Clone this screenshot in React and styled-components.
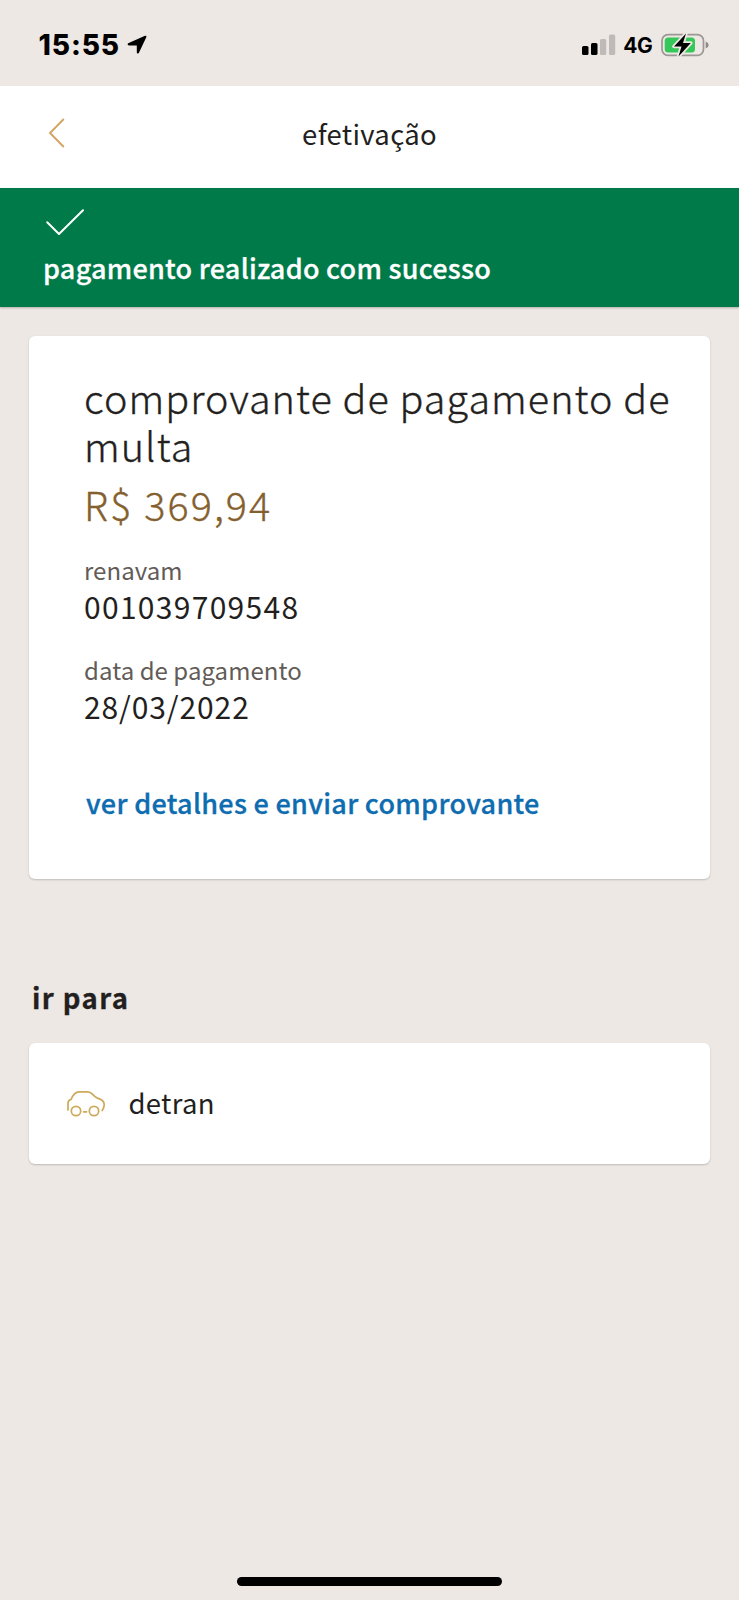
import React from "react";
import styled, { createGlobalStyle } from "styled-components";

const GlobalStyle = createGlobalStyle`
  * {
    box-sizing: border-box;
  }

  body {
    margin: 0;
    background: #ede8e4;
    font-family: "Noto Sans CJK JP", "Noto Sans", sans-serif;
    color: #231f1e;
  }
`;

const Screen = styled.div`
  display: flex;
  flex-direction: column;
  width: 739px;
  height: 1600px;
  overflow: hidden;
`;

const StatusBar = styled.div`
  display: flex;
  justify-content: space-between;
  align-items: center;
  height: 86px;
  padding: 4px 30px 0 38.5px;
  font-family: Inter, sans-serif;
  color: #000;
`;

const StatusGroup = styled.div`
  display: flex;
  align-items: center;
  gap: ${(props) => props.$gap}px;
`;

const Clock = styled.span`
  font-size: 28px;
  font-weight: 800;
  line-height: 34px;
  letter-spacing: 0.9px;
`;

const Network = styled.span`
  font-size: 21px;
  font-weight: 700;
  line-height: 26px;
  letter-spacing: -0.3px;
  padding: 1px 1px 0 0;
`;

const Header = styled.header`
  display: grid;
  grid-template-columns: 100px 1fr 100px;
  align-items: center;
  height: 101.5px;
  background: #fff;
`;

const BackButton = styled.button`
  display: flex;
  padding: 0 0 7px 48px;
  border: 0;
  background: none;
`;

const Title = styled.h1`
  margin: 0 0 8px;
  font-size: 27.5px;
  font-weight: 400;
  line-height: 40px;
  letter-spacing: 0.3px;
  text-align: center;
`;

const SuccessBanner = styled.div`
  display: flex;
  flex-direction: column;
  height: 119.5px;
  padding: 20px 43px 0;
  background: #007a49;
  color: #fff;
  box-shadow: 0 1px 2px rgba(0, 0, 0, 0.25);
`;

const BannerText = styled.strong`
  margin-top: 10px;
  font-size: 27px;
  font-weight: 500;
  line-height: 40px;
  letter-spacing: 0.25px;
  -webkit-text-stroke: 0.3px;
`;

const Content = styled.main`
  display: flex;
  flex-direction: column;
  flex: 1;
  padding: 29px 29px 0;
`;

const Card = styled.section`
  border-radius: 6px;
  background: #fff;
  box-shadow: 0 1px 2px rgba(0, 0, 0, 0.2);
`;

const ReceiptCard = styled(Card)`
  height: 543px;
  padding: 37px 0 0 55px;
`;

const ReceiptTitle = styled.h2`
  margin: 0;
  font-size: 39.5px;
  font-weight: 300;
  line-height: 48px;
  letter-spacing: 1.05px;
  -webkit-text-stroke: 0.35px;
`;

const Amount = styled.p`
  margin: 11px 0 25px;
  font-size: 39.5px;
  font-weight: 300;
  line-height: 48px;
  letter-spacing: 2.1px;
  color: #84602e;
  -webkit-text-stroke: 0.35px;
`;

const Field = styled.div`
  margin-bottom: 27px;
`;

const Label = styled.div`
  font-size: 24px;
  line-height: 33px;
  letter-spacing: 0.05px;
  color: #625b57;
`;

const Value = styled.div`
  font-size: 30px;
  line-height: 40px;
  letter-spacing: ${(props) => props.$tracking}px;
`;

const DetailsLink = styled.a`
  display: block;
  margin: 57px 0 0 2px;
  font-size: 27px;
  font-weight: 500;
  line-height: 40px;
  letter-spacing: 0.3px;
  color: #0e6cb0;
  -webkit-text-stroke: 0.3px;
`;

const SectionTitle = styled.h3`
  margin: 98px 0 26px 3px;
  font-size: 27.5px;
  font-weight: 700;
  line-height: 40px;
  letter-spacing: 1.4px;
  -webkit-text-stroke: 0.3px;
`;

const ShortcutCard = styled(Card)`
  display: flex;
  align-items: center;
  gap: 22.5px;
  height: 121px;
  padding-left: 37px;
`;

const ShortcutLabel = styled.span`
  margin-bottom: 3px;
  font-size: 27.5px;
  line-height: 40px;
  letter-spacing: 0.3px;
`;

const HomeIndicator = styled.div`
  width: 265px;
  height: 9px;
  margin: 0 auto 14px;
  border-radius: 5px;
  background: #000;
`;

function LocationIcon() {
  return (
    <svg width="20" height="20" viewBox="0 0 20 20">
      <path
        d="M1.2 8.2 18 .8Q19.9.4 19.3 2.2L11.8 18Q10.2 19.4 9.8 17.6V10.5H2Q-.3 9.8 1.2 8.2Z"
        fill="#000"
      />
    </svg>
  );
}

function SignalIcon() {
  return (
    <svg width="34" height="22" viewBox="0 0 34 22">
      <rect x="0" y="12" width="6.5" height="9" rx="1.6" fill="#000" />
      <rect x="9" y="9" width="6.5" height="12" rx="1.6" fill="#000" />
      <rect x="18" y="5" width="6.2" height="16" rx="1.6" fill="#bfbab7" />
      <rect x="27" y="0.5" width="6.2" height="20.5" rx="1.6" fill="#bfbab7" />
    </svg>
  );
}

function BatteryIcon() {
  return (
    <svg width="48" height="24" viewBox="0 0 48 24">
      <rect
        x="1"
        y="1.7"
        width="41.5"
        height="20.6"
        rx="6"
        fill="none"
        stroke="#9b9794"
        strokeWidth="1.7"
      />
      <path d="M44.7 8.6Q47.7 9.8 47.7 12T44.7 15.6Z" fill="#8d8986" />
      <rect x="3.7" y="4.4" width="30.3" height="15.2" rx="3.5" fill="#35c759" />
      <path
        d="M25 0.5 13 13.5H20.5L17.5 23.5 29.8 10H22Z"
        fill="#000"
        stroke="#ede8e4"
        strokeWidth="3.5"
        strokeLinejoin="round"
        paintOrder="stroke"
      />
    </svg>
  );
}

function BackIcon() {
  return (
    <svg width="18" height="30" viewBox="0 0 18 30">
      <path
        d="M15.3 1.5 2 15 15.3 28.5"
        fill="none"
        stroke="#d3a464"
        strokeWidth="1.9"
        strokeLinecap="round"
      />
    </svg>
  );
}

function CheckIcon() {
  return (
    <svg width="42" height="30" viewBox="0 0 42 30">
      <path
        d="M4.2 14.3 16 26 40 2.3"
        fill="none"
        stroke="#fff"
        strokeWidth="2"
        strokeLinecap="round"
        strokeLinejoin="round"
      />
    </svg>
  );
}

function CarIcon() {
  return (
    <svg width="40" height="28" viewBox="0 0 40 28">
      <g fill="none" stroke="#cda95c" strokeWidth="1.7" strokeLinecap="round">
        <path d="M2 20V13.5Q2 10.3 5.2 9.3C7 4.5 9 1.8 13.2 1.8H21Q23.6 1.8 25.5 3.3C27.5 5.4 29 7.3 31.4 8.1C36 9.3 38.2 11.3 38.2 14.5Q38.2 18 36.2 20.5" />
        <circle cx="10" cy="21" r="4.7" />
        <circle cx="28" cy="21" r="4.7" />
        <path d="M17.6 21.8H20.6" />
      </g>
    </svg>
  );
}

const fields = [
  { label: "renavam", value: "001039709548", tracking: 1.3 },
  { label: "data de pagamento", value: "28/03/2022", tracking: 0.9 },
];

export default function App() {
  return (
    <Screen>
      <GlobalStyle />
      <StatusBar>
        <StatusGroup $gap={7}>
          <Clock>15:55</Clock>
          <LocationIcon />
        </StatusGroup>
        <StatusGroup $gap={7.5}>
          <SignalIcon />
          <Network>4G</Network>
          <BatteryIcon />
        </StatusGroup>
      </StatusBar>
      <Header>
        <BackButton aria-label="voltar">
          <BackIcon />
        </BackButton>
        <Title>efetivação</Title>
      </Header>
      <SuccessBanner>
        <CheckIcon />
        <BannerText>pagamento realizado com sucesso</BannerText>
      </SuccessBanner>
      <Content>
        <ReceiptCard>
          <ReceiptTitle>
            comprovante de pagamento de
            <br />
            multa
          </ReceiptTitle>
          <Amount>R$ 369,94</Amount>
          {fields.map((field) => (
            <Field key={field.label}>
              <Label>{field.label}</Label>
              <Value $tracking={field.tracking}>{field.value}</Value>
            </Field>
          ))}
          <DetailsLink>ver detalhes e enviar comprovante</DetailsLink>
        </ReceiptCard>
        <SectionTitle>ir para</SectionTitle>
        <ShortcutCard>
          <CarIcon />
          <ShortcutLabel>detran</ShortcutLabel>
        </ShortcutCard>
      </Content>
      <HomeIndicator />
    </Screen>
  );
}
